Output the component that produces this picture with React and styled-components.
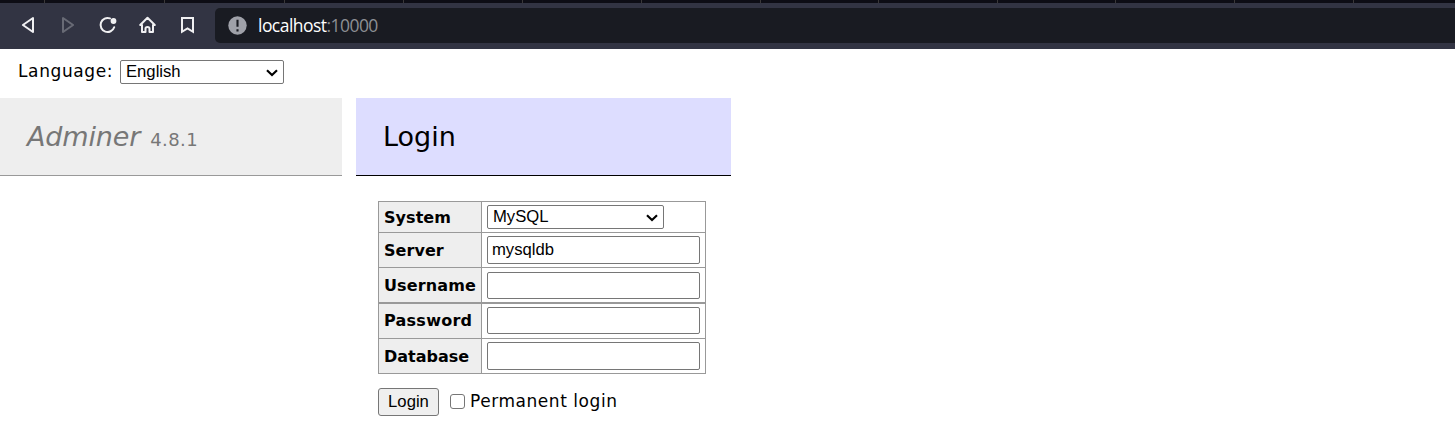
import React from "react";
import styled, { createGlobalStyle, css } from "styled-components";

const GlobalStyle = createGlobalStyle`
  *, *::before, *::after { box-sizing: border-box; }
  body {
    margin: 0;
    background: #fff;
    color: #000;
    font-family: "DejaVu Sans", Verdana, sans-serif;
    overflow: hidden;
  }
`;

const control = css`
  border: 1px solid #767676;
  border-radius: 2px;
  color: #000;
  background: #fff;
  font: 16.67px "Liberation Sans", Arial, sans-serif;
  outline: none;
  margin: 0;
`;

const TabStrip = styled.div`
  display: flex;
  height: 3px;
  background: #0d0d15;
  padding-left: 44px;
`;

const TabEdge = styled.div`
  flex: none;
  width: ${(p) => p.$width}px;
  border-left: 1px solid #3a3839;
`;

const Toolbar = styled.header`
  display: flex;
  align-items: flex-start;
  height: 46px;
  background: #323443;
  padding: 5px 0 0 16px;
`;

const NavButton = styled.span`
  display: flex;
  width: 40px;
  height: 24px;
  margin-top: 5px;
  flex: none;
  color: ${(p) => (p.$dim ? "#686a75" : "#f0f0f2")};
`;

const AddressBar = styled.div`
  display: flex;
  align-items: center;
  flex: 1;
  height: 35px;
  margin-left: -1px;
  padding-left: 13px;
  border-radius: 5px 0 0 5px;
  background: #191b22;
  color: #8d8f94;
  font: 17.5px/24px "Open Sans", "Noto Sans", sans-serif;
`;

const Url = styled.span`
  margin: -1px 0 0 11px;
  letter-spacing: -0.54px;
`;

const Host = styled.span`
  color: #fff;
`;

const LanguageBar = styled.div`
  display: flex;
  align-items: flex-start;
  height: 49px;
  padding: 11px 0 0 18px;
`;

const LanguageLabel = styled.label`
  width: 102px;
  margin-top: -1px;
  font-size: 17px;
  line-height: 24px;
  letter-spacing: 0.62px;
`;

const SelectBox = styled.div`
  position: relative;
  width: ${(p) => p.$width}px;
  height: 24px;
`;

const NativeSelect = styled.select`
  ${control}
  appearance: none;
  display: block;
  width: 100%;
  height: 24px;
  padding: 0 5px 1px;
`;

const Arrow = styled.svg`
  position: absolute;
  right: 6px;
  top: 9px;
  pointer-events: none;
`;

const Columns = styled.div`
  display: flex;
  gap: 14px;
`;

const Menu = styled.aside`
  width: 342px;
`;

const Brand = styled.h1`
  height: 78px;
  margin: 0;
  padding: 22px 0 0 27px;
  background: #eee;
  border-bottom: 1px solid #999;
  color: #777;
  font-weight: 400;
  font-size: 27px;
  line-height: 34px;
  white-space: nowrap;
`;

const BrandName = styled.span`
  font-style: italic;
  letter-spacing: -0.15px;
`;

const Version = styled.span`
  margin-left: 10px;
  font-size: 18px;
  letter-spacing: 0.4px;
`;

const Content = styled.main`
  width: 375px;
`;

const Title = styled.h2`
  height: 78px;
  margin: 0 0 25px;
  padding: 22px 0 0 27px;
  background: #ddf;
  border-bottom: 1px solid #000;
  font-weight: 400;
  font-size: 27px;
  line-height: 34px;
`;

const Form = styled.form`
  margin-left: 22px;
`;

const Fields = styled.div`
  width: 328px;
  border: 1px solid #999;
`;

const Row = styled.div`
  display: flex;
  height: ${(p) => p.$height}px;
  border-bottom: ${(p) => p.$line}px solid #999;
`;

const Heading = styled.label`
  width: 103px;
  padding: 0 0 0 5px;
  background: #eee;
  border-right: 1px solid #999;
  font-size: 16px;
  font-weight: 700;
  line-height: ${(p) => p.$line}px;
  letter-spacing: ${(p) => p.$spacing}px;
`;

const Cell = styled.div`
  padding: ${(p) => p.$top}px 0 0 5px;
`;

const TextInput = styled.input`
  ${control}
  display: block;
  width: 213px;
  height: ${(p) => p.$height}px;
  padding: 0 4px 1px;
`;

const Actions = styled.div`
  display: flex;
  align-items: center;
  height: 28px;
  margin-top: 14px;
`;

const LoginButton = styled.button`
  ${control}
  width: 61px;
  height: 28px;
  padding: 0 0 1px;
  background: #efefef;
  border-radius: 3px;
`;

const Checkbox = styled.input`
  appearance: none;
  width: 15px;
  height: 15px;
  margin: -1px 5px 0 11px;
  border: 1px solid #767676;
  border-radius: 3px;
  background: #fff;
`;

const Permanent = styled.label`
  display: flex;
  align-items: center;
  font-size: 17px;
  letter-spacing: 0.55px;
`;

const PermanentText = styled.span`
  margin-top: -3px;
`;

const Icon = ({ children }) => (
  <svg width="24" height="24" viewBox="0 0 24 24" fill="none" stroke="currentColor" strokeWidth="2" strokeLinejoin="round" strokeLinecap="round">
    {children}
  </svg>
);

const Select = ({ width, value }) => (
  <SelectBox $width={width}>
    <NativeSelect defaultValue={value}>
      <option>{value}</option>
    </NativeSelect>
    <Arrow width="12" height="8" viewBox="0 0 12 8" fill="none" stroke="#000" strokeWidth="2.1">
      <path d="M1 1.2 6 6.1 11 1.2" />
    </Arrow>
  </SelectBox>
);

const tabWidths = [120, 120, 119, 119, 119, 119, 118, 119, 118, 119, 119, 119];

const fields = [
  { label: "Server", value: "mysqldb", height: 35, line: 1, top: 3, input: 28, text: 36, spacing: 0.05 },
  { label: "Username", value: "", height: 36, line: 2, top: 4, input: 27, text: 36, spacing: 0.13 },
  { label: "Password", value: "", height: 35, line: 1, top: 3, input: 27, text: 33, spacing: 0.25 },
  { label: "Database", value: "", height: 34, line: 0, top: 3, input: 28, text: 36, spacing: 0 },
];

export default function App() {
  return (
    <>
      <GlobalStyle />
      <TabStrip>
        {tabWidths.map((w, i) => <TabEdge key={i} $width={w} />)}
      </TabStrip>
      <Toolbar>
        <NavButton>
          <Icon><path d="M17 5v14L6.9 12z" /></Icon>
        </NavButton>
        <NavButton $dim>
          <Icon><path d="M7 5v14L17.1 12z" /></Icon>
        </NavButton>
        <NavButton>
          <Icon>
            <path d="M14 5.4A7 7 0 1 0 18.2 14.2" />
            <circle cx="17.5" cy="8" r="1.9" fill="currentColor" />
          </Icon>
        </NavButton>
        <NavButton>
          <Icon><path d="M4.2 12 11.5 4.8 18.8 12H17V19H13.5V15.6Q13.5 14 11.5 14T9.5 15.6V19H6V12z" /></Icon>
        </NavButton>
        <NavButton>
          <Icon><path d="M6 5H17V18.8L11.5 15.4 6 18.8z" strokeLinejoin="miter" /></Icon>
        </NavButton>
        <AddressBar>
          <svg width="19" height="19" viewBox="0 0 19 19">
            <circle cx="9.5" cy="9.5" r="9.2" fill="#9fa1a9" />
            <path d="M9.5 3.8v7M9.5 13.2v2.2" stroke="#191b22" strokeWidth="2.1" />
          </svg>
          <Url><Host>localhost</Host>:10000</Url>
        </AddressBar>
      </Toolbar>
      <LanguageBar>
        <LanguageLabel>Language:</LanguageLabel>
        <Select width={164} value="English" />
      </LanguageBar>
      <Columns>
        <Menu>
          <Brand>
            <BrandName>Adminer</BrandName>
            <Version>4.8.1</Version>
          </Brand>
        </Menu>
        <Content>
          <Title>Login</Title>
          <Form>
            <Fields>
              <Row $height={31} $line={1}>
                <Heading $line={32} $spacing={0.05}>System</Heading>
                <Cell $top={3}><Select width={177} value="MySQL" /></Cell>
              </Row>
              {fields.map((f) => (
                <Row key={f.label} $height={f.height} $line={f.line}>
                  <Heading $line={f.text} $spacing={f.spacing}>{f.label}</Heading>
                  <Cell $top={f.top}>
                    <TextInput $height={f.input} defaultValue={f.value} />
                  </Cell>
                </Row>
              ))}
            </Fields>
            <Actions>
              <LoginButton type="button">Login</LoginButton>
              <Permanent>
                <Checkbox type="checkbox" />
                <PermanentText>Permanent login</PermanentText>
              </Permanent>
            </Actions>
          </Form>
        </Content>
      </Columns>
    </>
  );
}
